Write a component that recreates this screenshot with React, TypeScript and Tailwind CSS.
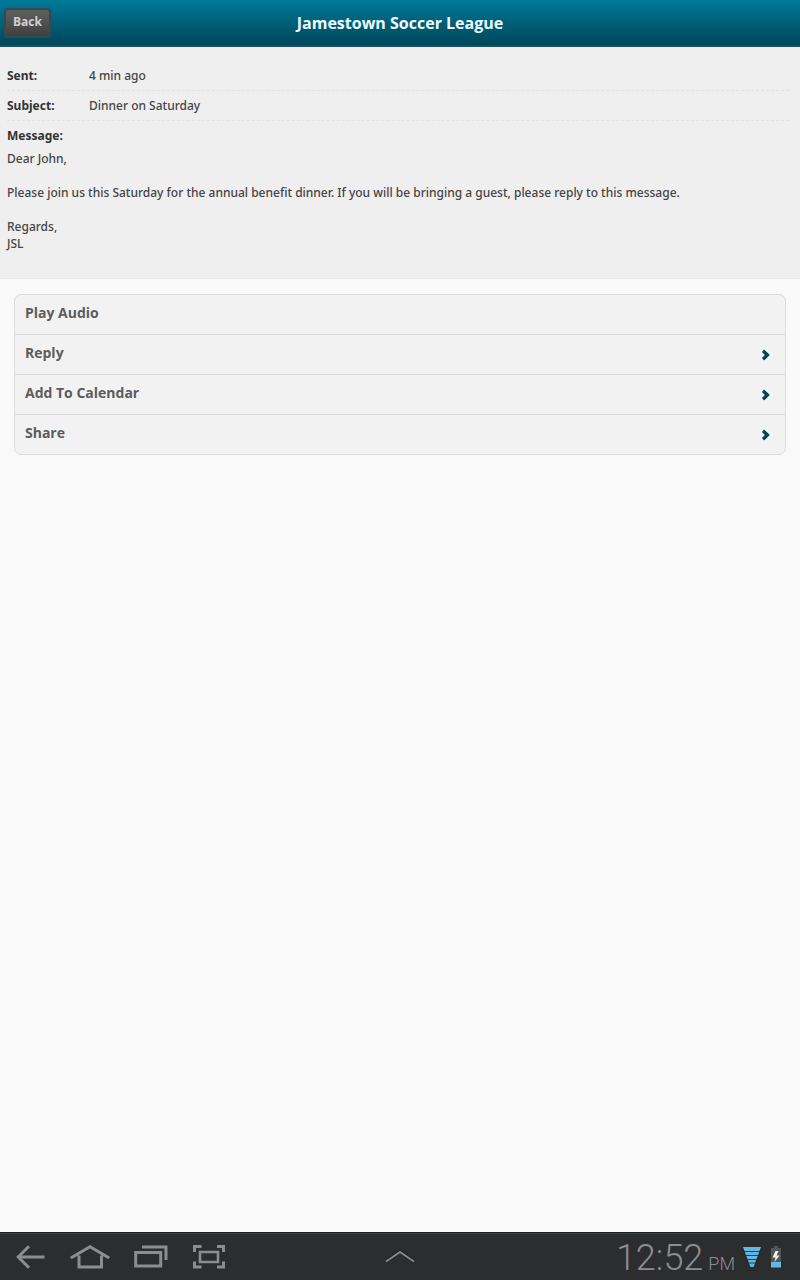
import type { ReactNode } from 'react';

const details = [
  { label: 'Sent:', value: '4 min ago' },
  { label: 'Subject:', value: 'Dinner on Saturday' },
];

const actions = [
  { label: 'Play Audio', arrow: false },
  { label: 'Reply', arrow: true },
  { label: 'Add To Calendar', arrow: true },
  { label: 'Share', arrow: true },
];

function Header() {
  return (
    <header className="grid h-[47px] grid-cols-[1fr_auto_1fr] items-center border-b-2 border-[#1c4f5e] bg-linear-to-b from-[#007a99] to-[#00475a] px-1">
      <button
        type="button"
        className="h-[30px] w-[47px] justify-self-start rounded-[4px] border-2 border-[#2f4b54] bg-linear-to-b from-[#606060] to-[#404040] pb-[2px] text-xs leading-4 font-bold text-[#d2d2d2]"
      >
        Back
      </button>
      <h1 className="text-base leading-6 font-bold text-[#eefcff]">Jamestown Soccer League</h1>
    </header>
  );
}

function Message() {
  return (
    <section className="border-b border-[#e9e9e9] bg-[#efefef] px-[7px] pt-[14px] pb-[26px] font-['Noto_Sans',sans-serif] text-xs font-medium text-[#444]">
      <dl>
        {details.map((item) => (
          <div
            key={item.label}
            className="mr-1 flex h-[30px] items-center border-b border-dashed border-[#e3e3e3]"
          >
            <dt className="w-[82px] font-bold text-[#333]">{item.label}</dt>
            <dd>{item.value}</dd>
          </div>
        ))}
      </dl>
      <h2 className="pt-[6px] leading-[18px] font-bold text-[#333]">Message:</h2>
      <div className="space-y-[17px] pt-[5px] leading-[17px]">
        <p>Dear John,</p>
        <p>
          Please join us this Saturday for the annual benefit dinner. If you will be bringing a
          guest, please reply to this message.
        </p>
        <p>
          Regards,
          <br />
          JSL
        </p>
      </div>
    </section>
  );
}

function Arrow() {
  return (
    <svg className="h-3 w-3" viewBox="0 0 12 12" fill="none">
      <path d="M3 1.5 7.8 6 3 10.5" stroke="#fff" strokeWidth="6" opacity=".6" />
      <path d="M3 1.8 7.4 6 3 10.2" stroke="#0b4354" strokeWidth="3.4" />
    </svg>
  );
}

function Actions() {
  return (
    <ul className="mx-[14px] mt-[15px] divide-y divide-[#dcdcdc] overflow-hidden rounded-[7px] border border-[#dcdcdc] bg-[#f2f2f2]">
      {actions.map((item) => (
        <li key={item.label} className="h-10 last:h-[39px]">
          <button
            type="button"
            className="flex h-full w-full items-center justify-between pr-[13px] pl-[10px] text-sm font-bold text-[#5c5c5c]"
          >
            <span className="pb-1">{item.label}</span>
            {item.arrow && <Arrow />}
          </button>
        </li>
      ))}
    </ul>
  );
}

function NavButton({ label, children }: { label: string; children: ReactNode }) {
  return (
    <button type="button" aria-label={label} className="flex h-full w-[60px] items-center justify-center">
      <svg className="h-7 w-10" viewBox="0 0 40 28" fill="none" stroke="#8b8d8e" strokeWidth="3">
        {children}
      </svg>
    </button>
  );
}

function SystemBar() {
  return (
    <footer className="grid h-12 grid-cols-[1fr_auto_1fr] items-center border-t border-[#1d1f20] bg-[#2b2d2e] shadow-[inset_0_1px_0_#3c3e3f]">
      <nav className="flex h-full">
        <NavButton label="Back">
          <path d="M34.5 14H8M19 3.2 8.2 14 19 24.8" />
        </NavButton>
        <NavButton label="Home">
          <path d="M.8 15 20 3.8 39.2 15M9 12.500v11.500h22.500V12.500" />
        </NavButton>
        <NavButton label="Recent apps">
          <path d="M5.700 9.500h25v13.500h-25zM12 4h24v13" />
        </NavButton>
        <NavButton label="Screenshot">
          <path d="M4.500 9V3.500H11.500M27 3.500h6.500V9M33.500 18.500V24H27M11.500 24H4.500v-5.500" />
          <path d="M10 9h18v10H10z" strokeWidth="2.600" />
        </NavButton>
      </nav>
      <button type="button" aria-label="Expand" className="flex h-full w-10 items-center justify-center">
        <svg className="h-4 w-[30px]" viewBox="0 0 30 16" fill="none">
          <path d="M1 11.500 15 2l14 9.500" stroke="#181a1b" strokeWidth="2" />
          <path d="M1 12.500 15 3l14 9.500" stroke="#858788" strokeWidth="2" />
        </svg>
      </button>
      <div className="flex items-center justify-end pr-[18px] text-[#8b8d8e]">
        <time className="flex items-baseline gap-[5px] pt-[2px] font-['Roboto','Liberation_Sans',sans-serif] font-light">
          <span className="text-4xl leading-[44px]">12:52</span>
          <span className="text-lg leading-5">PM</span>
        </time>
        <svg className="ml-2 h-5 w-[18px]" viewBox="0 0 18 20">
          <path d="M0 0h18L10.500 20h-3z" fill="#62b8e4" />
          <path d="M0 4.500h18M0 8.500h18M0 12.500h18M0 16h18" stroke="#2b2d2e" strokeWidth=".9" />
        </svg>
        <svg className="ml-[9px] h-[22px] w-3" viewBox="0 0 12 22">
          <path d="M4 0h4v2h3v19H1V2h3z" fill="#535657" />
          <path d="M1 16h10v5.500H1z" fill="#62b8e4" />
          <path d="M5.500 5 2.500 11.500h3L4.500 16l5-6.500H6.500L8.500 5z" fill="#f2f2f2" />
        </svg>
      </div>
    </footer>
  );
}

export default function App() {
  return (
    <div className="flex min-h-screen flex-col bg-[#f9f9f9] font-['Open_Sans','Noto_Sans',sans-serif]">
      <Header />
      <main className="flex-1">
        <Message />
        <Actions />
      </main>
      <SystemBar />
    </div>
  );
}
